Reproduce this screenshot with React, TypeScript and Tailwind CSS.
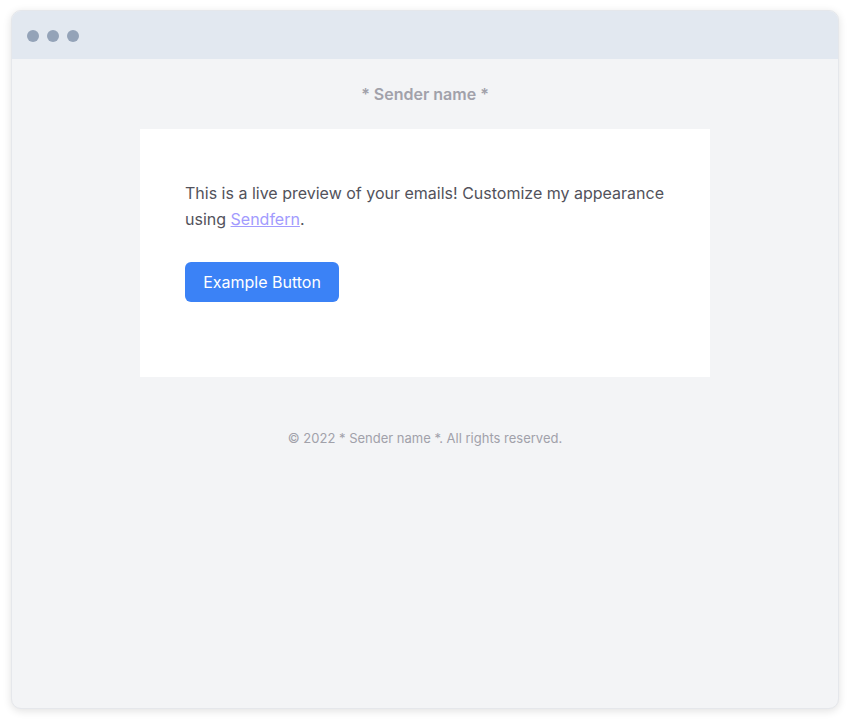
import React from 'react';

const App: React.FC = (): JSX.Element => {
  return (
    <div className="w-[854px] h-[727px] bg-white pl-[11px] pt-[10px] font-['Inter',sans-serif]">
      <div className="flex flex-col h-[699px] w-[828px] rounded-[10px] overflow-hidden border border-[#e5e7eb] bg-[#f3f4f6] shadow-[0_2px_8px_rgba(0,0,0,0.12)]">
        <div className="flex items-center gap-2 h-[48px] px-[15px] pt-[1px] bg-[#e2e8f0] shrink-0">
          <div className="h-3 w-3 rounded-full bg-[#94a3b8]" />
          <div className="h-3 w-3 rounded-full bg-[#94a3b8]" />
          <div className="h-3 w-3 rounded-full bg-[#94a3b8]" />
        </div>
        <div className="flex flex-col items-center">
          <div className="h-[70px] flex items-center text-[16px] font-semibold text-[#a1a1aa]">
            * Sender name *
          </div>
          <div className="w-[570px] bg-white pl-[45px] pr-[45px] pt-[51px] pb-[75px]">
            <p className="text-[16px] leading-[26px] text-[#52525b]">
              This is a live preview of your emails! Customize my appearance
              using{' '}
              <a className="text-[#a29bfe] underline cursor-pointer">Sendfern</a>.
            </p>
            <button className="mt-[30px] h-[40px] w-[154px] rounded-md bg-[#3b82f6] text-white text-[16px]">
              Example Button
            </button>
          </div>
          <div className="mt-[52px] text-[13px] leading-[18px] text-[#a1a1aa]">
            © 2022 * Sender name *. All rights reserved.
          </div>
        </div>
      </div>
    </div>
  );
};

export default App;
